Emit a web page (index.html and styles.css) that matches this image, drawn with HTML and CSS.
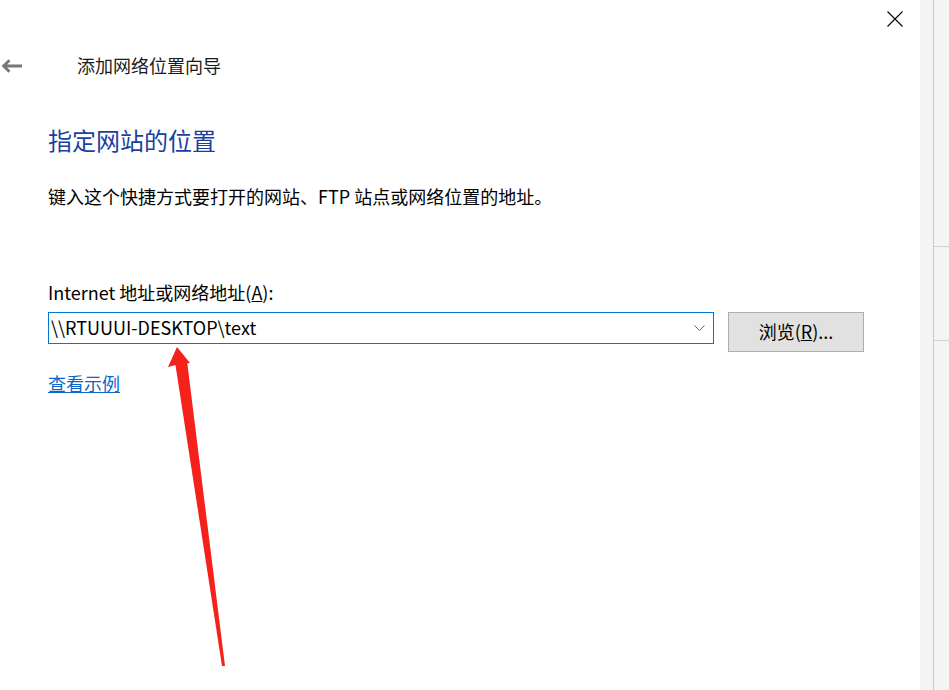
FILE: index.html
```html
<!DOCTYPE html>
<html lang="zh-CN">
<head>
<meta charset="utf-8">
<title>添加网络位置向导</title>
<link rel="stylesheet" href="styles.css">
</head>
<body>
<div class="window">
  <div class="main">
    <div class="topbar">
      <svg class="close" width="16" height="16" viewBox="0 0 16 16"><path d="M0.5 0.5 L15.5 15.5 M15.5 0.5 L0.5 15.5" stroke="#000" stroke-width="1.1" fill="none"/></svg>
    </div>
    <div class="nav">
      <svg class="back" width="21" height="14" viewBox="0 0 21 14"><path d="M21 7 H3 M8.5 1.2 L2.6 7 L8.5 12.8" stroke="#777" stroke-width="2.8" fill="none"/></svg>
      <span class="title">添加网络位置向导</span>
    </div>
    <div class="content">
      <h1 class="heading">指定网站的位置</h1>
      <p class="desc">键入这个快捷方式要打开的网站、FTP 站点或网络位置的地址。</p>
      <div class="label">Internet 地址或网络地址(<u>A</u>):</div>
      <div class="row">
        <div class="combo">
          <span class="combo-text">\\RTUUUI-DESKTOP\text</span>
          <svg class="chevron" width="11" height="7" viewBox="0 0 11 7"><path d="M0.5 0.5 L5.5 5.5 L10.5 0.5" stroke="#666" stroke-width="1" fill="none"/></svg>
        </div>
        <div class="button">浏览(<u>R</u>)...</div>
      </div>
      <a class="link" href="#">查看示例</a>
    </div>
  </div>
  <div class="side">
    <div class="side-gap"></div>
    <div class="side-rule"></div>
    <div class="side-panel">
      <div class="side-block b1"></div>
      <div class="side-block b2"></div>
    </div>
  </div>
  <svg class="annotation" width="949" height="690" viewBox="0 0 949 690">
    <polygon points="177,347 168,367 180,364 190,363" fill="#f5211b"/>
    <polygon points="175,362 187,361 225,666 222,666" fill="#f5211b"/>
  </svg>
</div>
</body>
</html>
```

FILE: styles.css
```css
html, body {
  margin: 0;
  padding: 0;
  background: #ffffff;
}

body {
  font-family: "Noto Sans CJK SC", "Noto Sans", sans-serif;
  color: #000;
}

.window {
  position: relative;
  display: flex;
  width: 949px;
  height: 690px;
  overflow: hidden;
}

.main {
  width: 920px;
  display: flex;
  flex-direction: column;
  background: #fff;
}

.topbar {
  height: 44px;
  box-sizing: border-box;
  padding: 11px 17px 0 0;
  display: flex;
  justify-content: flex-end;
  align-items: flex-start;
}

.close {
  display: block;
}

.nav {
  height: 42px;
  display: flex;
  align-items: center;
}

.back {
  display: block;
  margin-left: 1px;
  margin-top: 2px;
}

.title {
  margin-left: 55px;
  font-size: 18px;
  line-height: 24px;
  color: #1a1a1a;
}

.content {
  padding-left: 48px;
  display: flex;
  flex-direction: column;
  align-items: flex-start;
}

.heading {
  margin: 38px 0 0 0;
  font-size: 24px;
  line-height: 32px;
  font-weight: normal;
  color: #1b3f9f;
}

.desc {
  margin: 28px 0 0 0;
  font-size: 18px;
  line-height: 24px;
}

.label {
  margin-top: 72px;
  font-size: 18px;
  line-height: 24px;
}

.row {
  margin-top: 8px;
  display: flex;
  align-items: flex-start;
  gap: 14px;
}

.combo {
  width: 666px;
  height: 32px;
  box-sizing: border-box;
  border: 1px solid #0078d7;
  display: flex;
  align-items: center;
  justify-content: space-between;
  padding: 0 8px 3px 2px;
}

.combo-text {
  font-size: 18px;
  line-height: 24px;
}

.chevron {
  display: block;
  margin-top: 3px;
}

.button {
  width: 136px;
  height: 40px;
  box-sizing: border-box;
  background: #e1e1e1;
  border: 1px solid #adadad;
  display: flex;
  align-items: center;
  justify-content: center;
  padding-bottom: 2px;
  font-size: 18px;
  line-height: 24px;
}

.link {
  margin-top: 19px;
  font-size: 18px;
  line-height: 24px;
  color: #0a66cc;
  text-decoration: underline;
}

.side {
  flex: 1;
  display: flex;
  background: #f4f4f4;
}

.side-gap {
  width: 13px;
}

.side-rule {
  width: 1px;
  background: #c8c8c8;
}

.side-panel {
  flex: 1;
  display: flex;
  flex-direction: column;
}

.side-block {
  border-bottom: 1px solid #d2d2d2;
}

.b1 {
  height: 246px;
}

.b2 {
  height: 93px;
}

.annotation {
  position: absolute;
  left: 0;
  top: 0;
  pointer-events: none;
}
```
